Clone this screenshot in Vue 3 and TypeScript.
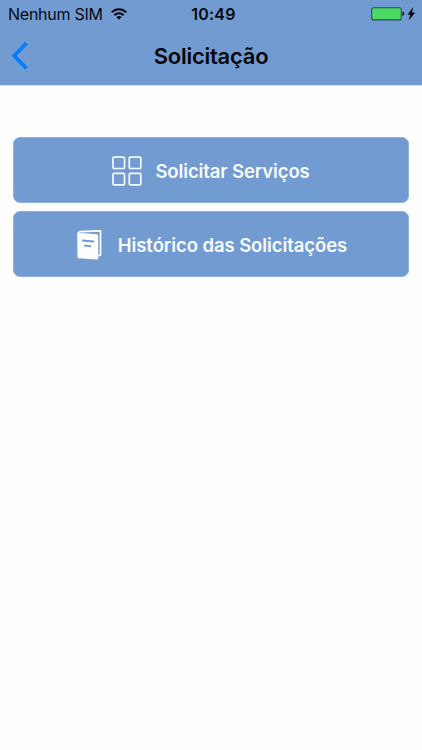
<script setup lang="ts">
type ActionIcon = 'grid' | 'book'

interface Action {
  id: string
  label: string
  icon: ActionIcon
}

const carrier: string = 'Nenhum SIM'
const time: string = '10:49'
const title: string = 'Solicitação'

const actions: Action[] = [
  { id: 'services', label: 'Solicitar Serviços', icon: 'grid' },
  { id: 'history', label: 'Histórico das Solicitações', icon: 'book' },
]
</script>

<template>
  <div class="screen">
    <header class="header">
      <div class="status">
        <div class="status-left">
          <span class="carrier">{{ carrier }}</span>
          <svg class="wifi" width="16" height="12" viewBox="0 0 16 12">
            <g fill="none" stroke="#050a12" stroke-width="2">
              <path d="M0.8 4.4C4.6 0.2 11.4 0.2 15.2 4.4" />
              <path d="M3.4 7.2C5.9 4.6 10.1 4.6 12.6 7.2" />
            </g>
            <path d="M5.4 9.1C6.9 7.7 9.1 7.7 10.6 9.1L8 11.8Z" fill="#050a12" />
          </svg>
        </div>
        <span class="time">{{ time }}</span>
        <div class="status-right">
          <svg width="45" height="14" viewBox="0 0 45 14">
            <rect x="0.7" y="0.7" width="29.6" height="12.2" rx="2" fill="#4cd964" stroke="#24505a" stroke-width="1.1" />
            <path d="M31.5 4.6C33.8 5 33.8 8.6 31.5 9Z" fill="#050a12" />
            <path d="M41.8 0.7L36.8 7.6H39.4L38 12.8L43.9 5.8H40.9Z" fill="#050a12" stroke="#050a12" stroke-width="0.3" />
          </svg>
        </div>
      </div>
      <nav class="nav">
        <button class="back" type="button" aria-label="Voltar">
          <svg width="18" height="30" viewBox="0 0 18 30">
            <path d="M15.5 2L3.2 14.7L15.5 27.4" fill="none" stroke="#087cfb" stroke-width="3.8" />
          </svg>
        </button>
        <h1 class="title">{{ title }}</h1>
      </nav>
    </header>
    <main class="actions">
      <button v-for="action in actions" :key="action.id" class="action" :class="action.id" type="button">
        <svg v-if="action.icon === 'grid'" class="icon" width="30" height="30" viewBox="0 0 30 30">
          <g fill="none" stroke="#f6fbff" stroke-width="1.7">
            <rect x="1" y="1.1" width="11.5" height="11.4" rx="1" />
            <rect x="17.3" y="1.1" width="11.5" height="11.4" rx="1" />
            <rect x="1" y="17.4" width="11.5" height="11.4" rx="1" />
            <rect x="17.3" y="17.4" width="11.5" height="11.4" rx="1" />
          </g>
        </svg>
        <svg v-else class="icon" width="25" height="30" viewBox="0 0 25 30">
          <path d="M1.1 3.6L2.6 1.7L23.5 0.9V25.1L21 25.7" fill="none" stroke="#fff" stroke-width="1.7" stroke-linejoin="round" />
          <path d="M0.2 3.8C0.2 3 0.8 2.6 1.8 2.7L20 4.3C20.8 4.4 21.2 4.8 21.2 5.6V28.4C21.2 29.2 20.7 29.5 19.9 29.4L1.8 28.2C1 28.1 0.5 27.7 0.5 26.9Z" fill="#fff" />
          <path d="M5.1 10.5L17.2 11.5M7.2 15.5L14.3 16.3" fill="none" stroke="#729bd1" stroke-width="1.8" />
        </svg>
        <span class="label">{{ action.label }}</span>
      </button>
    </main>
  </div>
</template>

<style>
body {
  background: #fefefe;
}
</style>

<style scoped>
.screen {
  box-sizing: border-box;
  min-height: 750px;
  background: #fefefe;
  color: #050a12;
  font-family: Inter, 'Liberation Sans', sans-serif;
}

.header {
  height: 85px;
  background: #729bd1;
  box-shadow: 0 1px 0 #d4deed;
}

.status {
  display: grid;
  grid-template-columns: 1fr auto 1fr;
  align-items: center;
  height: 28px;
  padding: 0 6px 0 8px;
}

.status-left {
  display: flex;
  align-items: center;
  gap: 8px;
}

.wifi {
  margin-top: -1px;
}

.carrier {
  font-size: 16px;
  line-height: 28px;
  letter-spacing: -0.25px;
  white-space: nowrap;
}

.time {
  padding-left: 3px;
  font-size: 16px;
  font-weight: 600;
  line-height: 28px;
  letter-spacing: 0.2px;
}

.status-right {
  display: flex;
  justify-content: flex-end;
}

.nav {
  display: grid;
  grid-template-columns: 60px 1fr 60px;
  align-items: center;
  height: 56px;
}

.back {
  display: flex;
  padding: 0 0 0 11px;
  border: 0;
  background: none;
}

.title {
  margin: 0;
  color: #04070c;
  font-size: 22px;
  font-weight: 600;
  line-height: 28px;
  letter-spacing: -0.25px;
  text-align: center;
  white-space: nowrap;
}

.actions {
  display: flex;
  flex-direction: column;
  gap: 8px;
  padding: 52px 13px 0;
}

.action {
  display: flex;
  align-items: center;
  justify-content: center;
  gap: 13px;
  box-sizing: border-box;
  height: 66px;
  padding: 1px 0 0;
  border: 1px solid #8fb0dc;
  border-radius: 7px;
  background: #729bd1;
  color: #f6fbff;
  font-family: inherit;
}

.history {
  gap: 16px;
  padding-left: 2px;
}

.icon {
  flex: none;
}

.label {
  font-size: 18.5px;
  font-weight: 600;
  line-height: 24px;
  letter-spacing: -0.12px;
  white-space: nowrap;
}

.history .label {
  letter-spacing: -0.08px;
}
</style>
